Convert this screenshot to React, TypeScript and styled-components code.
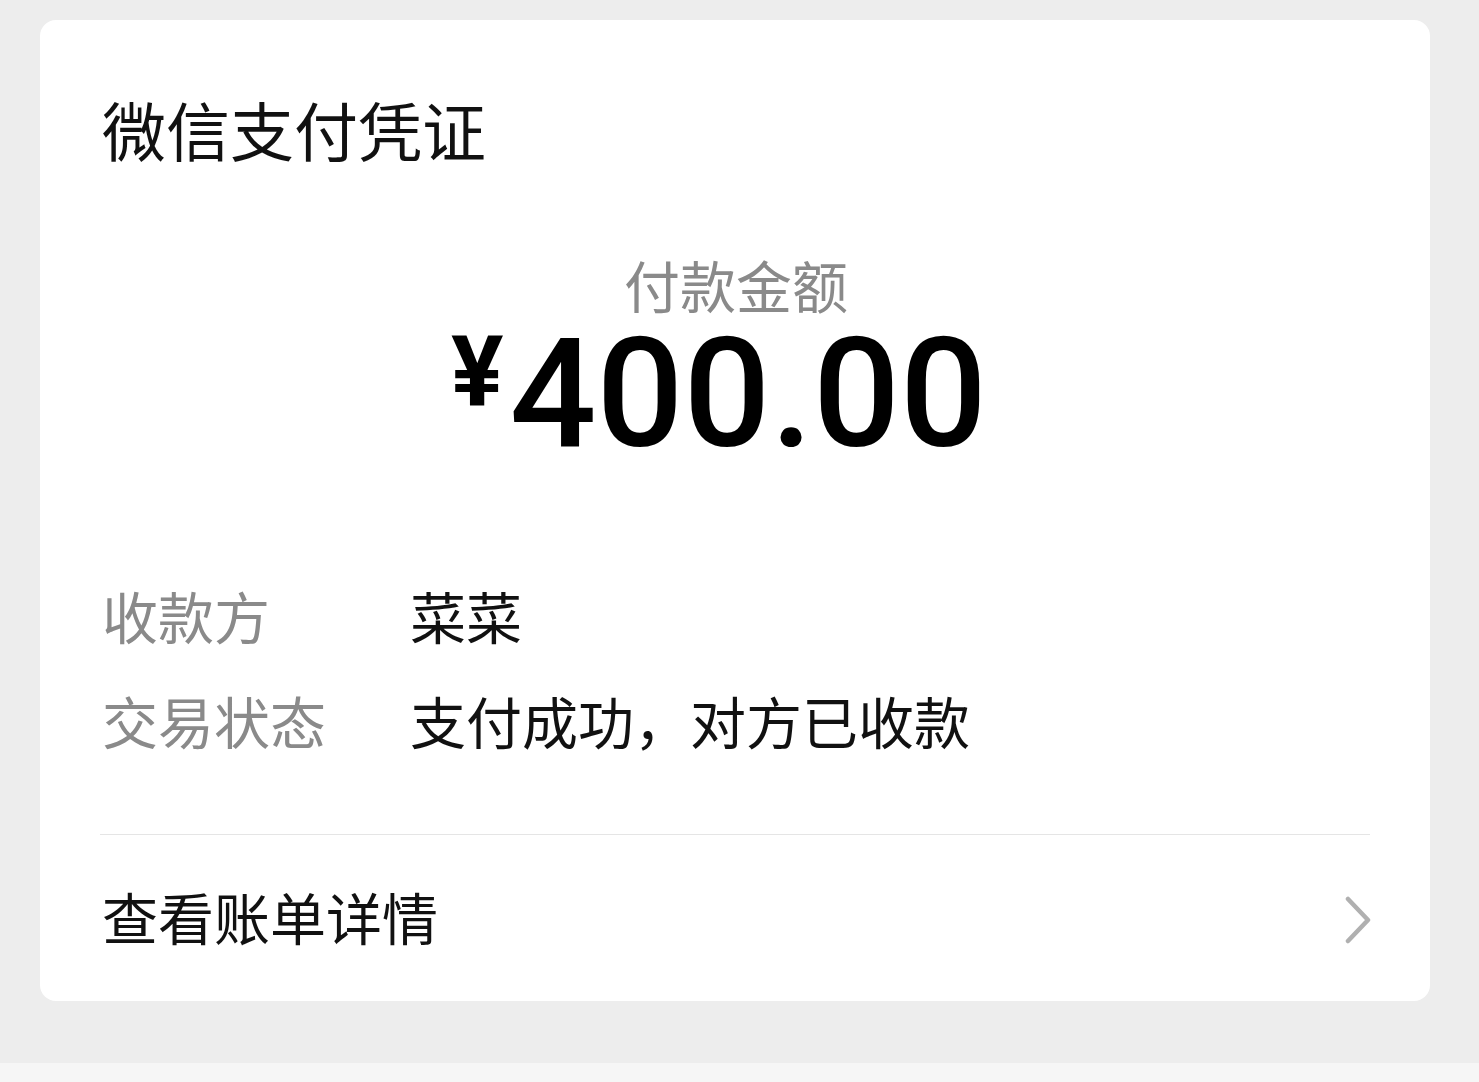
import styled, { createGlobalStyle } from 'styled-components';

const GlobalStyle = createGlobalStyle`
  html, body {
    margin: 0;
    padding: 0;
    background: #ededed;
  }
  body {
    font-family: 'Noto Sans CJK SC', 'Noto Sans', sans-serif;
    -webkit-font-smoothing: antialiased;
  }
`;

const Page = styled.div`
  display: flex;
  flex-direction: column;
  height: 1082px;
  padding-top: 20px;
  box-sizing: border-box;
  background: #ededed;
`;

const Card = styled.section`
  display: flex;
  flex-direction: column;
  width: 1390px;
  margin-left: 40px;
  padding: 76px 60px 57px 62px;
  box-sizing: border-box;
  background: #ffffff;
  border-radius: 16px;
`;

const Title = styled.h1`
  margin: 0;
  font-size: 64px;
  line-height: 1;
  font-weight: 400;
  color: #111111;
`;

const AmountBlock = styled.div`
  display: flex;
  flex-direction: column;
  align-items: center;
  margin-top: 96px;
`;

const AmountLabel = styled.div`
  font-size: 56px;
  line-height: 1;
  color: #8a8a8a;
`;

const Amount = styled.div`
  display: flex;
  align-items: flex-start;
  margin-top: 5px;
  padding-right: 34px;
  font-family: Roboto, 'Liberation Sans', sans-serif;
  font-weight: 500;
  color: #000000;
  line-height: 1;
`;

const Currency = styled.span`
  font-size: 98px;
  margin-top: 7px;
  margin-right: 6px;
  font-weight: 700;
`;

const Digits = styled.span`
  font-size: 153px;
`;

const Details = styled.div`
  display: flex;
  flex-direction: column;
  gap: 49px;
  margin-top: 117px;
`;

const Row = styled.div`
  display: grid;
  grid-template-columns: 308px 1fr;
  font-size: 56px;
  line-height: 1;
`;

const Label = styled.span`
  color: #8a8a8a;
`;

const Value = styled.span`
  color: #111111;
`;

const Divider = styled.hr`
  margin: 86px 0 0 -2px;
  border: 0;
  height: 1px;
  background: #e5e5e5;
`;

const LinkRow = styled.a`
  display: flex;
  align-items: center;
  justify-content: space-between;
  height: 56px;
  margin-top: 53px;
  font-size: 56px;
  line-height: 1;
  color: #111111;
  text-decoration: none;
`;

const ChevronIcon = styled.svg`
  margin-top: 7px;
  margin-right: -2px;
  flex-shrink: 0;
`;

const Footer = styled.div`
  margin-top: auto;
  height: 19px;
  background: #f6f6f6;
`;

const Chevron = () => (
  <ChevronIcon width="28" height="48" viewBox="0 0 28 48" fill="none">
    <path
      d="M4 3 L24 24 L4 45"
      stroke="#b0b0b0"
      strokeWidth="4.5"
      strokeLinecap="round"
      strokeLinejoin="round"
    />
  </ChevronIcon>
);

export default function App() {
  return (
    <>
      <GlobalStyle />
      <Page>
        <Card>
          <Title>微信支付凭证</Title>
          <AmountBlock>
            <AmountLabel>付款金额</AmountLabel>
            <Amount>
              <Currency>¥</Currency>
              <Digits>400.00</Digits>
            </Amount>
          </AmountBlock>
          <Details>
            <Row>
              <Label>收款方</Label>
              <Value>菜菜</Value>
            </Row>
            <Row>
              <Label>交易状态</Label>
              <Value>支付成功，对方已收款</Value>
            </Row>
          </Details>
          <Divider />
          <LinkRow href="#">
            查看账单详情
            <Chevron />
          </LinkRow>
        </Card>
        <Footer />
      </Page>
    </>
  );
}
